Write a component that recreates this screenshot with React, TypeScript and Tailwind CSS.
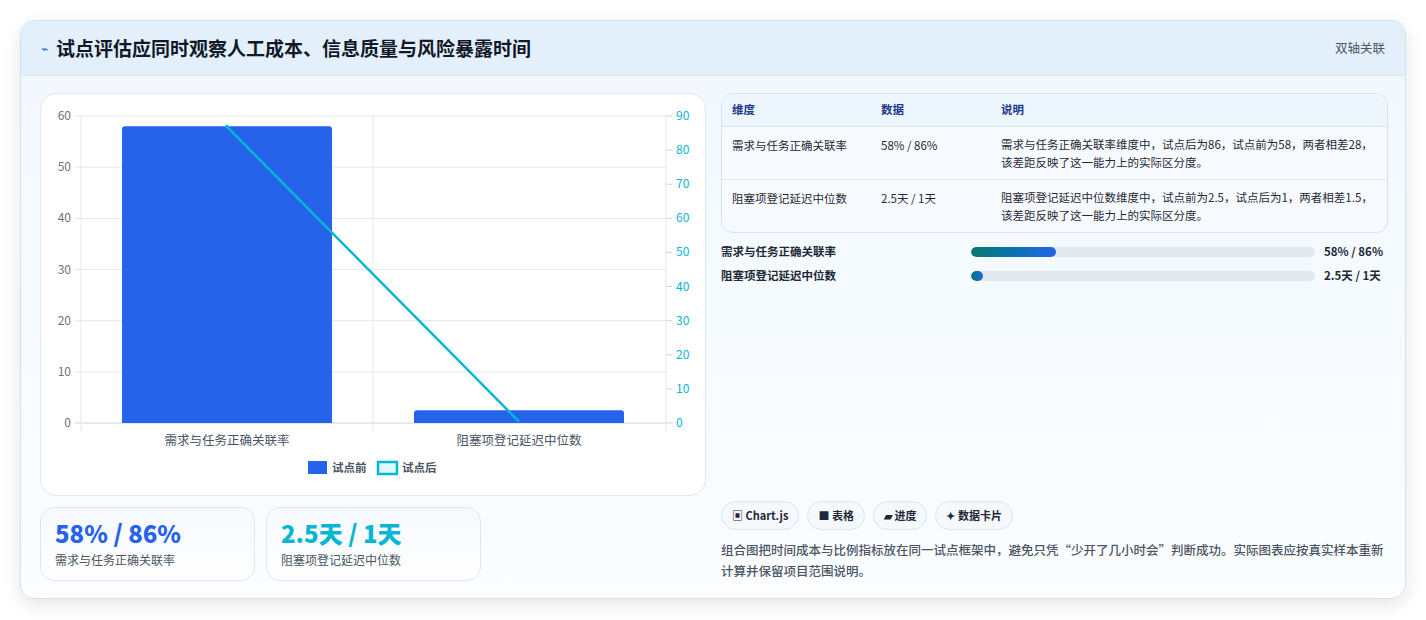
import React from "react";

const F = { fontFamily: '"Noto Sans CJK SC", "Noto Sans", sans-serif' };

function Chart() {
  const top = 115, bot = 422, L = 80, R = 665;
  const h = bot - top;
  const ly = [60, 50, 40, 30, 20, 10, 0];
  const ry = [90, 80, 70, 60, 50, 40, 30, 20, 10, 0];
  const yL = (v: number) => bot - (v / 60) * h;
  const yR = (v: number) => bot - (v / 90) * h;
  return (
    <svg width="665" height="402" viewBox="40 93 665 402" className="block">
      {ly.map((v) => (
        <g key={v}>
          <line x1={L - 6} x2={R} y1={yL(v)} y2={yL(v)} stroke={v === 0 ? "#cbd5e1" : "#e5e7eb"} />
          <text x={L - 10} y={yL(v) + 4} textAnchor="end" fontSize="12" fill="#6b7280" style={F}>{v}</text>
        </g>
      ))}
      {ry.map((v) => (
        <g key={v}>
          <line x1={R} x2={R + 6} y1={yR(v)} y2={yR(v)} stroke="#cbd5e1" />
          <text x={R + 10} y={yR(v) + 4} fontSize="12" fill="#06b6d4" style={F}>{v}</text>
        </g>
      ))}
      <line x1={L} x2={L} y1={top} y2={bot + 8} stroke="#e5e7eb" />
      <line x1={372} x2={372} y1={top} y2={bot + 8} stroke="#e5e7eb" />
      <line x1={R} x2={R} y1={top} y2={bot + 8} stroke="#e5e7eb" />
      <path d={`M121 ${bot} V${yL(58) + 3} q0 -3 3 -3 H328 q3 0 3 3 V${bot} Z`} fill="#2563eb" />
      <path d={`M413 ${bot} V${yL(2.5) + 3} q0 -3 3 -3 H620 q3 0 3 3 V${bot} Z`} fill="#2563eb" />
      <polyline points={`226,${yR(86) - 3} 518,${yR(1) + 2}`} fill="none" stroke="#06b6d4" strokeWidth="2.5" />
      <circle cx={226} cy={yR(86) - 3} r="2" fill="#06b6d4" />
      <text x={226} y={444} textAnchor="middle" fontSize="12.5" fill="#4b5563" style={F}>需求与任务正确关联率</text>
      <text x={518} y={444} textAnchor="middle" fontSize="12.5" fill="#4b5563" style={F}>阻塞项登记延迟中位数</text>
      <rect x={307} y={460} width={19} height={13} fill="#2563eb" />
      <text x={331} y={471} fontSize="11.5" fill="#4b5563" fontWeight="600" style={F}>试点前</text>
      <rect x={377} y={461} width={19} height={12} fill="#e0f7fa" stroke="#06b6d4" strokeWidth="2.5" />
      <text x={401} y={471} fontSize="11.5" fill="#4b5563" fontWeight="600" style={F}>试点后</text>
    </svg>
  );
}

export default function App() {
  return (
    <div className="w-[1426px] h-[620px] bg-white pt-[20px] pl-[20px]" style={F}>
      <div className="w-[1386px] h-[579px] rounded-[14px] border border-[#cfe3f3] shadow-[0_6px_18px_rgba(0,0,0,0.10)] overflow-hidden bg-gradient-to-b from-[#f1f8fe] to-[#fbfdff] flex flex-col">
        <div className="h-[55px] shrink-0 bg-[#e3f0fc] border-b border-[#d6e6f5] flex items-center justify-between pl-[20px] pr-[20px]">
          <div className="flex items-center gap-[8px]">
            <span className="text-[#2563eb] text-[12px]">⌁</span>
            <span className="text-[19px] font-bold text-[#111827]">试点评估应同时观察人工成本、信息质量与风险暴露时间</span>
          </div>
          <span className="text-[12.5px] text-[#4b5563]">双轴关联</span>
        </div>
        <div className="flex gap-[15px] pl-[19px] pt-[17px]">
          <div className="w-[666px] flex flex-col gap-[11px]">
            <div className="h-[403px] bg-white rounded-[16px] border border-[#dfe8f1] overflow-hidden">
              <Chart />
            </div>
            <div className="flex gap-[11px]">
              {[
                ["58% / 86%", "需求与任务正确关联率", "text-[#2563eb]"],
                ["2.5天 / 1天", "阻塞项登记延迟中位数", "text-[#06b6d4]"],
              ].map(([v, l, c]) => (
                <div key={l} className="w-[215px] h-[74px] rounded-[14px] border border-[#dde7f2] bg-gradient-to-b from-[#f6f9fd] to-white pl-[14px] pt-[10px]">
                  <div className={`text-[24px] font-extrabold leading-[30px] ${c}`}>{v}</div>
                  <div className="text-[12px] text-[#4b5563] mt-[3px]">{l}</div>
                </div>
              ))}
            </div>
          </div>
          <div className="w-[667px] flex flex-col">
            <div className="rounded-[12px] border border-[#d6e2ee] overflow-hidden bg-[#f7fbff] text-[11.5px]">
              <div className="flex h-[33px] items-center bg-[#edf5fd] border-b border-[#d6e2ee] text-[#1e3a8a] font-semibold">
                <div className="w-[159px] pl-[10px]">维度</div>
                <div className="w-[120px]">数据</div>
                <div className="flex-1">说明</div>
              </div>
              {[
                ["需求与任务正确关联率", "58% / 86%", "需求与任务正确关联率维度中，试点后为86，试点前为58，两者相差28，该差距反映了这一能力上的实际区分度。"],
                ["阻塞项登记延迟中位数", "2.5天 / 1天", "阻塞项登记延迟中位数维度中，试点前为2.5，试点后为1，两者相差1.5，该差距反映了这一能力上的实际区分度。"],
              ].map(([a, b, c], i) => (
                <div key={a} className={`flex py-[8px] text-[#1f2937] leading-[18px] ${i === 0 ? "border-b border-[#e2eaf2]" : ""}`}>
                  <div className="w-[159px] pl-[10px] pt-[1px]">{a}</div>
                  <div className="w-[120px] pt-[1px]">{b}</div>
                  <div className="flex-1 pr-[12px]">{c}</div>
                </div>
              ))}
            </div>
            <div className="mt-[10px] flex flex-col gap-[6px] text-[11.5px] font-semibold text-[#1f2937]">
              {[
                ["需求与任务正确关联率", "58% / 86%", "w-[85px]"],
                ["阻塞项登记延迟中位数", "2.5天 / 1天", "w-[12px]"],
              ].map(([a, b, w]) => (
                <div key={a} className="flex items-center h-[18px]">
                  <div className="w-[250px]">{a}</div>
                  <div className="w-[344px] h-[10px] rounded-full bg-[#e2e8f0] overflow-hidden">
                    <div className={`h-full rounded-full bg-gradient-to-r from-[#0f766e] to-[#2563eb] ${w}`} />
                  </div>
                  <div className="ml-[9px]">{b}</div>
                </div>
              ))}
            </div>
            <div className="flex-1" />
            <div className="flex gap-[8px] mt-[206px]">
              {["▣ Chart.js", "■ 表格", "▰ 进度", "✦ 数据卡片"].map((t) => (
                <div key={t} className="h-[29px] px-[10px] rounded-full border border-[#dbe4ee] bg-[#f6f9fc] text-[11px] font-semibold text-[#1f2937] flex items-center">{t}</div>
              ))}
            </div>
            <div className="mt-[9px] text-[12.5px] leading-[21px] text-[#4b5563] font-medium">
              组合图把时间成本与比例指标放在同一试点框架中，避免只凭“少开了几小时会”判断成功。实际图表应按真实样本重新计算并保留项目范围说明。
            </div>
          </div>
        </div>
      </div>
    </div>
  );
}
